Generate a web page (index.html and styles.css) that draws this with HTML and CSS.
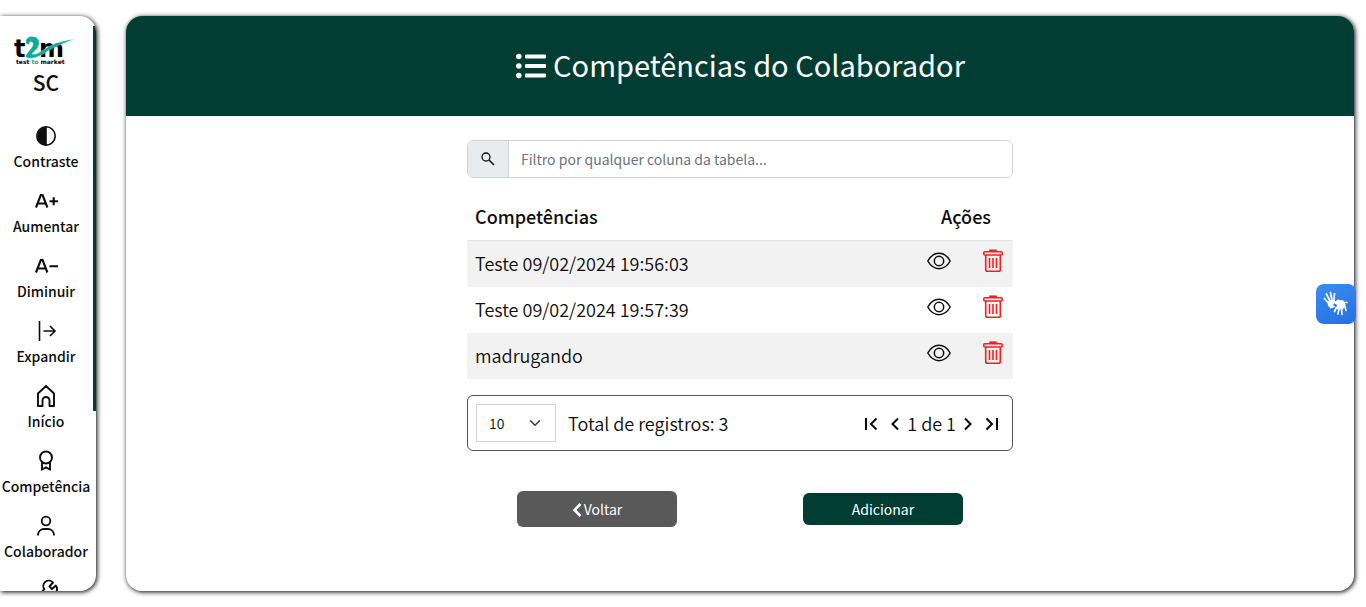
FILE: index.html
```html
<!DOCTYPE html>
<html lang="pt-BR">
<head>
<meta charset="utf-8">
<meta name="viewport" content="width=device-width, initial-scale=1">
<title>Competências do Colaborador</title>
<link rel="stylesheet" href="styles.css">
</head>
<body>
<svg class="sprite" aria-hidden="true">
  <symbol id="eye" viewBox="0 0 24 24"><path d="M.8 12C3.500 7.300 7.400 4.300 12 4.300S20.500 7.300 23.200 12C20.500 16.700 16.600 19.700 12 19.700S3.500 16.700.8 12Z" fill="none" stroke="currentColor" stroke-width="1.500"/><circle cx="12" cy="12" r="4.700" fill="none" stroke="currentColor" stroke-width="1.500"/></symbol>
  <symbol id="trash" viewBox="0 0 24 24"><g fill="none" stroke="currentColor" stroke-width="1.600"><rect x="2.800" y="2.800" width="18.400" height="3.200" rx="1"/><path d="M9 2.200V1.200h6v1z" fill="currentColor"/><path d="M4.700 6v14.500a1.800 1.800 0 0 0 1.800 1.800h11a1.800 1.800 0 0 0 1.800-1.800V6M8.500 9v10M12 9v10M15.500 9v10"/></g></symbol>
</svg>
<aside class="sidebar">
  <div class="sidebar-scroll">
    <div class="brand">
      <svg class="logo" viewBox="0 0 66 32" role="img" aria-label="t2m test to market">
        <text class="logo-letter" x="1" y="21">t</text>
        <text class="logo-letter" x="26" y="21">m</text>
        <path d="M13 7C12 3 15 .5 19 .5C24 .5 27 4 26 8.500C25 13 21 15 19 18C22 19 26 17 30 14C40 7.500 50 4.500 62 3C50 7 42 10.500 34 15.500C26 21 19 24 12.500 21C14 15.500 20 12 20 8C20 5 16 5 16.500 7.500C16 9 13.500 8.500 13 7Z" fill="#0bab9b" stroke="#fff" stroke-width=".3"/>
        <text class="logo-tag" x="3" y="28">test <tspan fill="#0bab9b">to</tspan> market</text>
      </svg>
      <span class="initials">SC</span>
    </div>
    <nav class="menu">
      <button class="item" type="button"><svg viewBox="0 0 24 24"><circle cx="12" cy="12" r="9.200" fill="none" stroke="currentColor" stroke-width="1.600"/><path d="M12.800 2.500a9.500 9.500 0 1 0 0 19Z" fill="currentColor"/></svg><span>Contraste</span></button>
      <button class="item" type="button"><svg viewBox="0 0 24 24"><path d="M2 18.500 6.800 6h1.800l4.800 12.500M3.900 14.500h7.600M15.500 12.200H24M19.700 8.200v8" fill="none" stroke="currentColor" stroke-width="2.100"/></svg><span>Aumentar</span></button>
      <button class="item" type="button"><svg viewBox="0 0 24 24"><path d="M2 18.500 6.800 6h1.800l4.800 12.500M3.900 14.500h7.600M15.500 12.200H24" fill="none" stroke="currentColor" stroke-width="2.100"/></svg><span>Diminuir</span></button>
      <button class="item" type="button"><svg viewBox="0 0 24 24"><path d="M5.500 2v20M9.500 12h11.500M16 7l5 5-5 5" fill="none" stroke="currentColor" stroke-width="1.600"/></svg><span>Expandir</span></button>
      <a class="item" href="#inicio"><svg viewBox="0 0 24 24"><path d="M4 22V9.500L12 2l8 7.500V22h-4.500v-5.500a3.500 3.500 0 0 0-7 0V22Z" fill="none" stroke="currentColor" stroke-width="1.900" stroke-linejoin="round"/></svg><span>Início</span></a>
      <a class="item" href="#competencia"><svg viewBox="0 0 24 24"><circle cx="12" cy="8.500" r="6" fill="none" stroke="currentColor" stroke-width="1.900"/><path d="M8 13.200V20.500l4-2.200 4 2.200V13.200" fill="none" stroke="currentColor" stroke-width="1.900"/></svg><span>Competência</span></a>
      <a class="item" href="#colaborador"><svg viewBox="0 0 24 24"><circle cx="12" cy="7" r="4.300" fill="none" stroke="currentColor" stroke-width="1.800"/><path d="M4 21.500v-1a6 6 0 0 1 6-5.500h4a6 6 0 0 1 6 5.500v1" fill="none" stroke="currentColor" stroke-width="1.800"/></svg><span>Colaborador</span></a>
      <a class="item" href="#ferramentas" aria-label="Ferramentas"><svg viewBox="0 0 24 24"><path d="M19 3.500a5.500 5.500 0 0 0-8.700 6.700L4 17.500 7 21l7.500-6.500a5.500 5.500 0 0 0 7.300-8L18 10l-2.500-2.500Z" fill="none" stroke="currentColor" stroke-width="1.900" stroke-linejoin="round"/></svg></a>
    </nav>
  </div>
  <span class="scroll-thumb"></span>
</aside>
<main class="panel">
  <header class="panel-header">
    <svg class="list-icon" viewBox="0 0 32 32" aria-hidden="true"><g fill="currentColor"><circle cx="3.800" cy="6.500" r="2.800"/><circle cx="3.800" cy="16" r="2.800"/><circle cx="3.800" cy="25.500" r="2.800"/><rect x="10" y="4.500" width="21" height="4" rx="1"/><rect x="10" y="14" width="21" height="4" rx="1"/><rect x="10" y="23.500" width="21" height="4" rx="1"/></g></svg>
    <h1>Competências do Colaborador</h1>
  </header>
  <div class="content">
    <div class="search">
      <label class="search-icon" for="filtro" aria-label="Filtro"><svg viewBox="0 0 16 16"><circle cx="6" cy="6" r="4" fill="none" stroke="currentColor" stroke-width="1.300"/><path d="m9 9 5 5" stroke="currentColor" stroke-width="1.600"/></svg></label>
      <input id="filtro" type="text" placeholder="Filtro por qualquer coluna da tabela...">
    </div>
    <table class="grid">
      <thead><tr><th>Competências</th><th class="col-actions">Ações</th></tr></thead>
      <tbody>
        <tr><td>Teste 09/02/2024 19:56:03</td><td class="col-actions"><div class="actions"><button class="icon-btn" type="button" aria-label="Ver"><svg><use href="#eye"/></svg></button><button class="icon-btn danger" type="button" aria-label="Excluir"><svg><use href="#trash"/></svg></button></div></td></tr>
        <tr><td>Teste 09/02/2024 19:57:39</td><td class="col-actions"><div class="actions"><button class="icon-btn" type="button" aria-label="Ver"><svg><use href="#eye"/></svg></button><button class="icon-btn danger" type="button" aria-label="Excluir"><svg><use href="#trash"/></svg></button></div></td></tr>
        <tr><td>madrugando</td><td class="col-actions"><div class="actions"><button class="icon-btn" type="button" aria-label="Ver"><svg><use href="#eye"/></svg></button><button class="icon-btn danger" type="button" aria-label="Excluir"><svg><use href="#trash"/></svg></button></div></td></tr>
      </tbody>
    </table>
    <div class="pager">
      <select aria-label="Registros por página"><option>10</option><option>25</option><option>50</option></select>
      <span class="total">Total de registros: 3</span>
      <div class="pages">
        <button class="icon-btn" type="button" aria-label="Primeira"><svg viewBox="0 0 24 24"><path d="M7 7v12M17.500 7.500 12 13l5.500 5.500" fill="none" stroke="currentColor" stroke-width="2.100"/></svg></button>
        <button class="icon-btn" type="button" aria-label="Anterior"><svg viewBox="0 0 24 24"><path d="M15 7.500 9.500 13l5.500 5.500" fill="none" stroke="currentColor" stroke-width="2.100"/></svg></button>
        <span class="page-info">1 de 1</span>
        <button class="icon-btn" type="button" aria-label="Próxima"><svg viewBox="0 0 24 24"><path d="M9 7.500 14.500 13 9 18.500" fill="none" stroke="currentColor" stroke-width="2.100"/></svg></button>
        <button class="icon-btn" type="button" aria-label="Última"><svg viewBox="0 0 24 24"><path d="M17 7v12M6.500 7.500 12 13l-5.500 5.500" fill="none" stroke="currentColor" stroke-width="2.100"/></svg></button>
      </div>
    </div>
    <div class="buttons">
      <button class="btn back" type="button"><svg viewBox="0 0 10 16"><path d="M8.500 3 2.500 9l6 6" fill="none" stroke="currentColor" stroke-width="2.600"/></svg>Voltar</button>
      <button class="btn add" type="button">Adicionar</button>
    </div>
  </div>
</main>
<button class="vlibras" type="button" aria-label="Libras"><svg viewBox="0 0 40 40"><g fill="none" stroke="#fff" stroke-linecap="round"><path d="M12.500 19 8.500 14.500M14 17l-3.500-7M16 16.500 14.500 8.500M17.800 16.500 18.500 9.500" stroke-width="1.700"/><path d="M18.500 27.500l2-4M21.800 30l1.500-6M26 30.500l-.5-6.500M28.500 21l1.500 5.500M28 18.500h3" stroke-width="1.700"/></g><path d="M11.500 17.500 18.500 15.500 19.500 18 17 21l2.500 2-5 1.500-2.500-3Z" fill="#fff"/><path d="M17.500 18.500 22 15.500l5.500 1 2 4-2.500 5-6.500-.5.500-4Z" fill="#fff"/></svg></button>
</body>
</html>
```

FILE: styles.css
```css
* { box-sizing: border-box; }
body {
  margin: 0;
  height: 100vh;
  display: flex;
  gap: 30px;
  padding: 16px 12px 16px 0;
  overflow: hidden;
  background: #fff;
  color: #0d0d0d;
  font-family: "Noto Sans CJK SC", "Noto Sans", sans-serif;
  font-size: 18px;
  line-height: 30px;
}
button, input, select { font: inherit; color: inherit; }
button { border: 0; padding: 0; background: none; cursor: pointer; }
svg { display: block; }
.sprite { position: absolute; width: 0; height: 0; }

.sidebar {
  position: relative;
  flex: none;
  width: 96px;
  border-radius: 0 16px 16px 0;
  box-shadow: 1px 1px 5px #000;
  overflow: hidden;
}
.sidebar-scroll {
  height: 100%;
  padding-right: 4px;
  overflow-y: auto;
  scrollbar-width: none;
}
.scroll-thumb {
  position: absolute;
  top: 10px;
  right: 0;
  width: 3px;
  height: 67%;
  background: #023d33;
}
.brand {
  display: flex;
  flex-direction: column;
  align-items: center;
  padding-top: 20px;
}
.logo { width: 66px; height: 32px; overflow: visible; }
.logo-letter { font: bold 24px "DejaVu Sans", sans-serif; }
.logo-tag { font: bold 6px "DejaVu Sans", sans-serif; }
.initials { font-size: 21px; line-height: 28px; font-weight: 500; }
.menu {
  display: flex;
  flex-direction: column;
  gap: 17px;
  padding-top: 28px;
}
.item {
  display: flex;
  flex-direction: column;
  align-items: center;
  gap: 2px;
  color: inherit;
  text-decoration: none;
  font-size: 14px;
  line-height: 22px;
  font-weight: 500;
}
.item svg { width: 24px; height: 24px; }

.panel {
  flex: 1;
  min-width: 0;
  border-radius: 16px;
  box-shadow: 1px 1px 5px #000;
  overflow: hidden;
}
.panel-header {
  display: flex;
  align-items: center;
  justify-content: center;
  gap: 6px;
  height: 100px;
  background: #023d33;
  color: #fff;
}
.list-icon { width: 32px; height: 32px; }
h1 { margin: 0; padding-bottom: 4px; font-size: 29px; line-height: 44px; font-weight: 400; }
.content {
  width: 100%;
  max-width: 546px;
  margin: 0 auto;
  padding: 24px 0;
  display: flex;
  flex-direction: column;
  gap: 16px;
}
.search {
  display: flex;
  height: 38px;
  border: 1px solid #ced4da;
  border-radius: 6px;
  overflow: hidden;
}
.search-icon {
  display: grid;
  place-items: center;
  width: 41px;
  background: #e9ecef;
  border-right: 1px solid #ced4da;
}
.search-icon svg { width: 16px; height: 16px; }
.search input {
  flex: 1;
  min-width: 0;
  border: 0;
  outline: 0;
  padding: 0 12px;
  font-size: 14px;
}
.search input::placeholder { color: #6c757d; opacity: 1; }

.grid { width: 100%; border-collapse: collapse; line-height: 28px; }
th { padding: 8px 8px 10px; text-align: left; font-weight: 500; }
thead tr { border-bottom: 1px solid #dee2e6; }
td { padding: 8px 8px 10px; vertical-align: top; font-weight: 350; }
tbody tr:nth-child(odd) { background: #f2f2f2; }
.col-actions { width: 94px; text-align: center; }
.actions { display: flex; justify-content: space-between; }
.icon-btn, .icon-btn svg { width: 24px; height: 24px; }
.danger { color: #fb1d1d; }

.pager {
  display: flex;
  align-items: center;
  gap: 12px;
  padding: 8px;
  border: 1px solid #555;
  border-radius: 6px;
  font-weight: 350;
}
.pager select {
  appearance: none;
  width: 80px;
  height: 38px;
  padding: 0 12px;
  border: 1px solid #ced4da;
  border-radius: 0;
  font-size: 14px;
  background: url("data:image/svg+xml,%3Csvg xmlns='http://www.w3.org/2000/svg' viewBox='0 0 16 16'%3E%3Cpath d='m2 5 6 6 6-6' fill='none' stroke='%23343a40' stroke-width='2' stroke-linecap='round' stroke-linejoin='round'/%3E%3C/svg%3E") right 14px center / 12px 12px no-repeat #fff;
}
.pages { display: flex; align-items: center; margin-left: auto; }

.buttons {
  display: flex;
  align-items: center;
  justify-content: space-between;
  padding: 24px 50px 0;
}
.btn {
  display: flex;
  align-items: center;
  justify-content: center;
  gap: 2px;
  width: 160px;
  border-radius: 6px;
  color: #fff;
  font-size: 14px;
  line-height: 24px;
}
.btn svg { width: 10px; height: 16px; }
.back { height: 36px; background: #595959; }
.add { height: 32px; background: #023d33; }

.vlibras {
  position: fixed;
  right: 10px;
  top: 50%;
  transform: translateY(-50%);
  width: 40px;
  height: 40px;
  border-radius: 8px;
  background: linear-gradient(160deg, #3a8cf2, #2670e0);
}
```
